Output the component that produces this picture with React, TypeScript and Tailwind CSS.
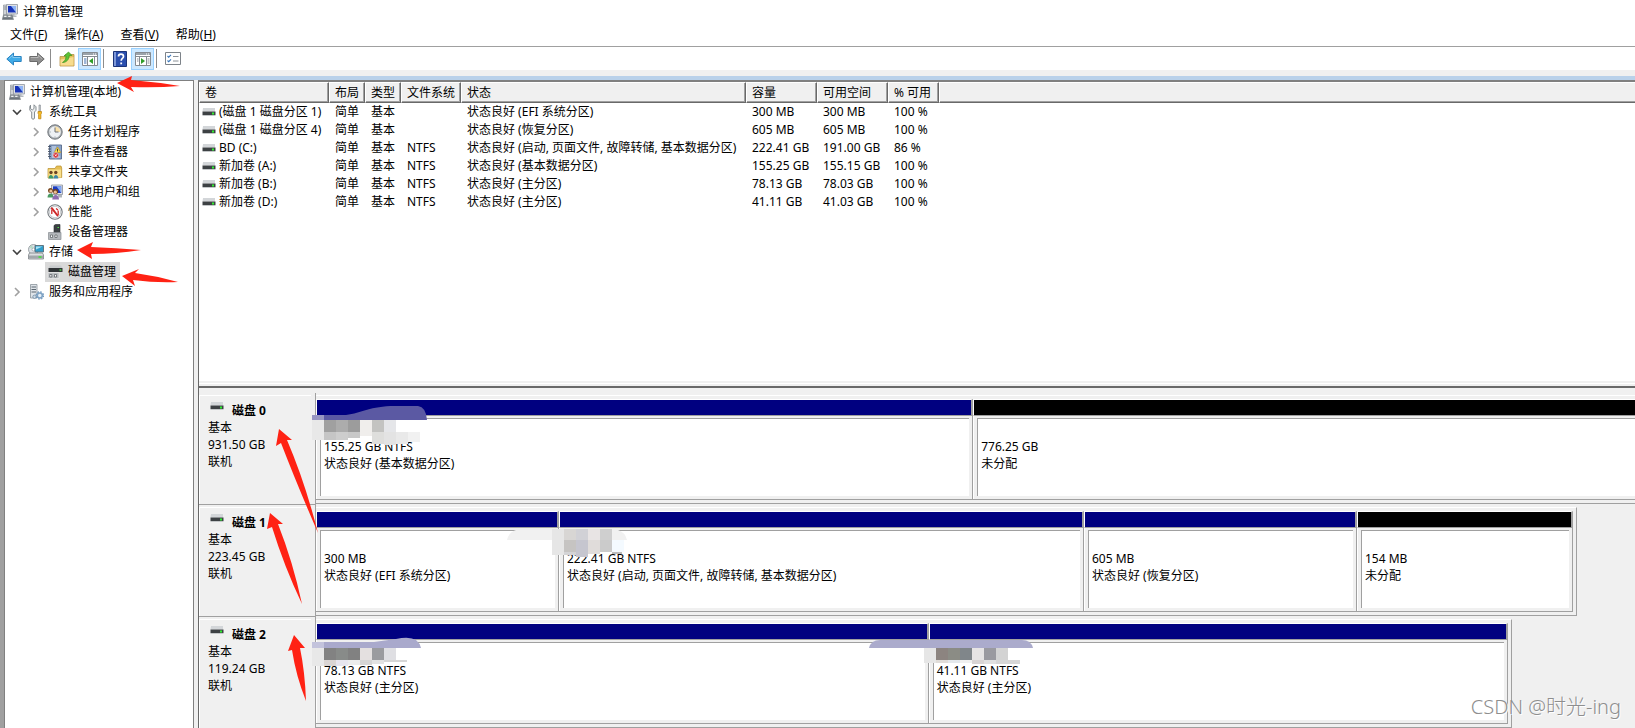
import React, { useState } from "react";

type IconProps = { className?: string };

type TreeItem = {
  label: string;
  level: number;
  arrow?: "open" | "closed";
  icon: (props: IconProps) => React.ReactElement;
};

type Volume = {
  name: string;
  fs: string;
  status: string;
  capacity: string;
  free: string;
  percent: string;
};

type Partition = {
  size: string;
  status: string;
  flex: string;
  unallocated?: boolean;
};

type Disk = {
  name: string;
  size: string;
  width: string;
  partitions: Partition[];
};

/* ---------- icons ---------- */

function ComputerIcon({ className }: IconProps) {
  return (
    <svg className={className} width="16" height="16" viewBox="0 0 16 16">
      <path d="M1.500 1h3.500v10H1.500z" fill="#cfd3d7" stroke="#858b91" strokeWidth=".6" />
      <path d="M2.300 3h2M2.300 5h2" stroke="#6b7178" strokeWidth=".8" />
      <path d="M4.500.5h11v9.500h-11z" fill="#dfe2e6" stroke="#9197a0" strokeWidth=".8" />
      <path d="M6 2h8v6.500H6z" fill="#1733b8" />
      <path d="M9 2h5v6.500z" fill="#8fb4f5" />
      <path d="M9 10h3.500v1.500h2V13H8z" fill="#b4b9be" />
      <path d="M1.500 11h8.500l1.500 4.500H.3z" fill="#8b9399" stroke="#6c747b" strokeWidth=".6" />
      <path d="M2.200 12.300h2.300M6.200 12.300h2.300" stroke="#f2f4f5" strokeWidth="1.200" />
      <path d="M1 14.200h9.500" stroke="#59616a" strokeWidth=".9" />
    </svg>
  );
}

function ToolsIcon({ className }: IconProps) {
  return (
    <svg className={className} width="16" height="16" viewBox="0 0 16 16">
      <path d="M2.500 1.200v3.300l1.700 1.500L6 4.500V.8l2 2v3.500L6.500 8v6c0 1.600-2.800 1.600-2.800 0V8L1.800 6.300V2.500z" fill="#eceeef" stroke="#7c8389" strokeWidth=".9" />
      <path d="M11 1h1.400v6.500H11z" fill="#d5d8db" stroke="#777e85" strokeWidth=".6" />
      <path d="M10 7.500h3.500v1.800l-.600 1v4.500h-2.300v-4.500l-.600-1z" fill="#f8bd25" stroke="#b87e0c" strokeWidth=".7" />
    </svg>
  );
}

function ClockIcon({ className }: IconProps) {
  return (
    <svg className={className} width="16" height="16" viewBox="0 0 16 16">
      <circle cx="8" cy="8" r="7.200" fill="#a4a9ae" stroke="#72777c" strokeWidth="1" />
      <circle cx="8" cy="8" r="5.800" fill="#eef1f4" />
      <path d="M8 2.500V8h5.200A5.300 5.300 0 0 0 8 2.500z" fill="#f8e0aa" />
      <path d="M8 3.500V8h3.500" fill="none" stroke="#6a7178" strokeWidth="1" />
      <path d="M8 12.500v1M2.700 8h1" stroke="#7e868d" strokeWidth=".8" />
    </svg>
  );
}

function EventIcon({ className }: IconProps) {
  return (
    <svg className={className} width="16" height="16" viewBox="0 0 16 16">
      <path d="M2.500 1h12v14h-12z" fill="#8ba4c8" stroke="#56698a" strokeWidth=".9" />
      <path d="M5 3h4M5 5h3M5 7h2.500M5 9h1.500M5 11h1M5 13h8" stroke="#dde6f2" strokeWidth=".9" />
      <path d="M1 2.500h3M1 5h3M1 7.500h3M1 10h3M1 12.500h3" stroke="#4a5364" strokeWidth=".9" />
      <path d="M10.500 3l3.200 5.500H7.300z" fill="#ffe14a" stroke="#c7940f" strokeWidth=".6" />
      <path d="M10.500 4.800V7M10.500 7.400v.700" stroke="#333" strokeWidth=".9" />
      <circle cx="8.800" cy="11.300" r="2.700" fill="#d62f35" stroke="#f3d4d6" strokeWidth=".6" />
      <path d="M7.800 10.300l2 2M9.800 10.300l-2 2" stroke="#fff" strokeWidth=".8" />
    </svg>
  );
}

function SharedFolderIcon({ className }: IconProps) {
  return (
    <svg className={className} width="16" height="16" viewBox="0 0 16 16">
      <path d="M1 4.500h7L9.500 2H14l.700 2V13.500L1 14z" fill="#e6bf55" stroke="#b98f2d" strokeWidth=".7" />
      <path d="M1.500 5.500H14V13.500L1.500 14z" fill="#f8df8c" />
      <circle cx="4" cy="8.500" r="1.700" fill="#6b4424" />
      <circle cx="8.800" cy="8.500" r="1.700" fill="#6b4424" />
      <path d="M1.500 14.500c0-4.800 4.800-4.800 4.800 0z" fill="#3c9a6a" />
      <path d="M6.500 14.500c0-4.800 4.800-4.800 4.800 0z" fill="#3f86a8" />
    </svg>
  );
}

function UsersIcon({ className }: IconProps) {
  return (
    <svg className={className} width="16" height="16" viewBox="0 0 16 16">
      <path d="M4.500 1h11v9.500h-11z" fill="#dfe3e8" stroke="#8b9199" strokeWidth=".8" />
      <path d="M6 2.300h8.200V9H6z" fill="#1b3cc0" />
      <path d="M9.500 2.300h4.700V9z" fill="#84abf3" />
      <path d="M11 11h4v2.500h-5z" fill="#b0b5ba" />
      <circle cx="3.500" cy="6.500" r="2.500" fill="#7a4a22" />
      <circle cx="3.800" cy="7" r="1.500" fill="#eabf94" />
      <circle cx="8.500" cy="7.500" r="2.600" fill="#6e421f" />
      <circle cx="8.300" cy="8.200" r="1.600" fill="#eabf94" />
      <path d="M.5 13.500c0-5.500 6-5.500 6 0z" fill="#4a9a62" />
      <path d="M5.300 15.500c0-6 6.700-6 6.700 0z" fill="#8d6cae" />
    </svg>
  );
}

function PerformanceIcon({ className }: IconProps) {
  return (
    <svg className={className} width="16" height="16" viewBox="0 0 16 16">
      <circle cx="8" cy="8" r="7.200" fill="#fff" stroke="#73787d" strokeWidth="1.100" />
      <circle cx="8" cy="8" r="5.700" fill="none" stroke="#c2c6ca" strokeWidth=".9" />
      <path d="M4.800 10V5.500M11.200 11V6.500M9 4.500l2 1.500" fill="none" stroke="#cf2a2a" strokeWidth="1.300" />
      <path d="M4.800 4.200l5.700 7.300" stroke="#cf2a2a" strokeWidth="2" strokeLinecap="round" />
    </svg>
  );
}

function DeviceIcon({ className }: IconProps) {
  return (
    <svg className={className} width="16" height="16" viewBox="0 0 16 16">
      <path d="M7 1.500l1.500-1H13V9H7z" fill="#3b4043" stroke="#25282b" strokeWidth=".6" />
      <path d="M10.500 3.500h1.500" stroke="#55e04e" strokeWidth="1.200" />
      <path d="M1.500 8.500H14V15.500H1.500z" fill="#b4b8bc" stroke="#888d92" strokeWidth=".7" />
      <path d="M3.500 11h2v2.500h-2zM8 11h2v2.500H8z" fill="#fff" stroke="#565b60" strokeWidth=".7" />
    </svg>
  );
}

function StorageIcon({ className }: IconProps) {
  return (
    <svg className={className} width="16" height="16" viewBox="0 0 16 16">
      <circle cx="5.500" cy="5.500" r="5" fill="#dde2e6" stroke="#899096" strokeWidth=".8" />
      <path d="M5.500 5.500L1.500 3.500A4.500 4.500 0 0 1 4 1.200z" fill="#b4dcc4" />
      <circle cx="5.500" cy="5.500" r="1.500" fill="#fff" stroke="#8a9096" strokeWidth=".6" />
      <path d="M7 1.500h8.500V8H7z" fill="#2e9dcb" stroke="#5c6d76" strokeWidth=".9" />
      <path d="M8 2.500h6.500L8 5.500z" fill="#a9e3f6" />
      <path d="M1.500 9h13l1 2v4H.5v-4z" fill="#dcdfe1" stroke="#7c8287" strokeWidth=".8" />
      <path d="M1 11.500h14v3H1z" fill="#a2a7ab" />
      <path d="M10.500 13h3" stroke="#45e03c" strokeWidth="1.600" />
    </svg>
  );
}

function DiskManageIcon({ className }: IconProps) {
  return (
    <svg className={className} width="16" height="16" viewBox="0 0 16 16">
      <path d="M3 1.500h11l1.500 2.500H1.500z" fill="#c9ccce" />
      <path d="M1.500 4h14v4h-14z" fill="#303437" />
      <path d="M12.500 6h1.800" stroke="#4fe048" strokeWidth="1.400" />
      <path d="M1 8.500h11V14.500H1z" fill="#b9bdc0" stroke="#e9e9e9" strokeWidth=".7" />
      <path d="M2.800 10.500h2v2.500h-2zM7.500 10.500h2v2.500h-2z" fill="#fff" stroke="#50555a" strokeWidth=".7" />
    </svg>
  );
}

function ServicesIcon({ className }: IconProps) {
  return (
    <svg className={className} width="16" height="16" viewBox="0 0 16 16">
      <path d="M2.500.5H9v13.500H2.500z" fill="#dfe4e9" stroke="#8a939b" strokeWidth=".8" />
      <path d="M3.500 3H8M3.500 5.500H8M3.500 8H8" stroke="#5b6670" strokeWidth="1" />
      <circle cx="11.800" cy="11.500" r="2.500" fill="#e8f0f7" stroke="#7fa3c4" strokeWidth="1.500" />
      <circle cx="11.800" cy="11.500" r="3.700" fill="none" stroke="#6f97bd" strokeWidth="1.200" strokeDasharray="1.600 1.300" />
      <circle cx="6.500" cy="12.800" r="1.700" fill="#cfdbe6" stroke="#7a94ac" strokeWidth=".9" />
    </svg>
  );
}

function DriveIcon({ className }: IconProps) {
  return (
    <svg className={className} width="14" height="8" viewBox="0 0 14 8">
      <path d="M1 0h12v3.500H.5z" fill="#d3d6d9" />
      <path d="M.5 3.500h13V7H.5z" fill="#3d4144" />
      <path d="M.5 7h13v1H.5z" fill="#c4c7c9" />
      <path d="M10 4.500h2v2h-2z" fill="#30ee30" />
    </svg>
  );
}

function ArrowIcon({ fill, stroke, flip }: { fill: string; stroke: string; flip?: boolean }) {
  return (
    <svg className={flip ? "-scale-x-100" : ""} width="16" height="16" viewBox="0 0 16 16">
      <path d="M.8 8L7.500 2v3.500h7.700v5H7.500V14z" fill={fill} stroke={stroke} strokeWidth="1" strokeLinejoin="round" />
      <path d="M3 7.700L6.800 4.200v2.300h7.500" fill="none" stroke="#fff" strokeOpacity=".4" strokeWidth=".9" />
    </svg>
  );
}

function UpFolderIcon() {
  return (
    <svg width="16" height="16" viewBox="0 0 16 16">
      <path d="M1 5.500h4.500l1-2H15v11.500H1z" fill="#e5bf5c" stroke="#b8934a" strokeWidth=".8" />
      <path d="M1.500 8.500L14.500 6v8.500h-13z" fill="#f7dc8e" />
      <path d="M3.500 11.500c2.500-1.300 3.500-3.500 3.500-6.500H5L9.500 1 13 4.500h-2.700C10 8.500 7.500 11.500 3.500 11.500z" fill="#5cc236" stroke="#3d9420" strokeWidth=".7" />
    </svg>
  );
}

function PaneIcon({ right }: { right?: boolean }) {
  return (
    <svg width="16" height="14" viewBox="0 0 16 14">
      <path d="M.5.5h15v13H.5z" fill="#fff" stroke="#858b91" />
      <path d="M1 1h14v2H1z" fill="#9ba3aa" />
      <path d="M11 2h1M13 2h1" stroke="#fff" />
      <path d="M1 4.500h14" stroke="#858b91" />
      {right ? (
        <>
          <path d="M11.500 5v8M4.500 5v8" stroke="#858b91" />
          <path d="M12.500 7h2M12.500 9h2M12.500 11h2M2 7h1.500M2 9h1.500" stroke="#858b91" />
          <path d="M6 6l4 3-4 3z" fill="#2f9e28" />
        </>
      ) : (
        <>
          <path d="M5.500 5v8M12.500 5v8" stroke="#858b91" />
          <path d="M2 7h2.500M2 9h2.500M2 11h2.500" stroke="#3f6fae" />
          <path d="M11 6L7 9l4 3z" fill="#2f9e28" />
        </>
      )}
    </svg>
  );
}

function HelpIcon() {
  return (
    <svg width="14" height="16" viewBox="0 0 14 16">
      <path d="M.5.5h13v15H.5z" fill="#2b4fae" stroke="#1c3479" />
      <path d="M1 1h2v14H1z" fill="#7e98d8" />
      <path d="M5.500 5.500c0-3.200 5-3.200 5 0 0 2-2.300 2-2.300 4.300" fill="none" stroke="#fff" strokeWidth="1.700" />
      <path d="M7.300 11.500h1.800v1.800H7.300z" fill="#fff" />
    </svg>
  );
}

function ListIcon() {
  return (
    <svg width="16" height="13" viewBox="0 0 16 13">
      <path d="M.5.5h15v12H.5z" fill="#fff" stroke="#7d8389" />
      <path d="M2.500 4l1.200 1.200L6 2.800M2.500 8.500l1.200 1.200L6 7.300" fill="none" stroke="#3876ba" strokeWidth="1.100" />
      <path d="M8 4.500h5.500M8 9h5.500" stroke="#8c9298" />
    </svg>
  );
}

function Chevron({ open }: { open: boolean }) {
  return (
    <svg width="10" height="10" viewBox="0 0 10 10" fill="none">
      {open ? (
        <path d="M1 3l4 4 4-4" stroke="#404040" strokeWidth="1.600" />
      ) : (
        <path d="M3 1l4 4-4 4" stroke="#a0a0a0" strokeWidth="1.600" />
      )}
    </svg>
  );
}

/* ---------- data ---------- */

const menus = [
  { text: "文件", key: "F" },
  { text: "操作", key: "A" },
  { text: "查看", key: "V" },
  { text: "帮助", key: "H" },
];

const tree: TreeItem[] = [
  { label: "计算机管理(本地)", level: 0, icon: ComputerIcon },
  { label: "系统工具", level: 1, arrow: "open", icon: ToolsIcon },
  { label: "任务计划程序", level: 2, arrow: "closed", icon: ClockIcon },
  { label: "事件查看器", level: 2, arrow: "closed", icon: EventIcon },
  { label: "共享文件夹", level: 2, arrow: "closed", icon: SharedFolderIcon },
  { label: "本地用户和组", level: 2, arrow: "closed", icon: UsersIcon },
  { label: "性能", level: 2, arrow: "closed", icon: PerformanceIcon },
  { label: "设备管理器", level: 2, icon: DeviceIcon },
  { label: "存储", level: 1, arrow: "open", icon: StorageIcon },
  { label: "磁盘管理", level: 2, icon: DiskManageIcon },
  { label: "服务和应用程序", level: 1, arrow: "closed", icon: ServicesIcon },
];

const indent = ["pl-[2px]", "pl-px", "pl-5"];

const columns = [
  { title: "卷", width: "w-[130px]" },
  { title: "布局", width: "w-9" },
  { title: "类型", width: "w-9" },
  { title: "文件系统", width: "w-[60px]" },
  { title: "状态", width: "w-[285px]" },
  { title: "容量", width: "w-[71px]" },
  { title: "可用空间", width: "w-[71px]" },
  { title: "% 可用", width: "w-[51px]" },
];

const volumes: Volume[] = [
  { name: "(磁盘 1 磁盘分区 1)", fs: "", status: "状态良好 (EFI 系统分区)", capacity: "300 MB", free: "300 MB", percent: "100 %" },
  { name: "(磁盘 1 磁盘分区 4)", fs: "", status: "状态良好 (恢复分区)", capacity: "605 MB", free: "605 MB", percent: "100 %" },
  { name: "BD (C:)", fs: "NTFS", status: "状态良好 (启动, 页面文件, 故障转储, 基本数据分区)", capacity: "222.41 GB", free: "191.00 GB", percent: "86 %" },
  { name: "新加卷 (A:)", fs: "NTFS", status: "状态良好 (基本数据分区)", capacity: "155.25 GB", free: "155.15 GB", percent: "100 %" },
  { name: "新加卷 (B:)", fs: "NTFS", status: "状态良好 (主分区)", capacity: "78.13 GB", free: "78.03 GB", percent: "100 %" },
  { name: "新加卷 (D:)", fs: "NTFS", status: "状态良好 (主分区)", capacity: "41.11 GB", free: "41.03 GB", percent: "100 %" },
];

// disk 0 is wider than the view and runs off its right edge
const disks: Disk[] = [
  {
    name: "磁盘 0",
    size: "931.50 GB",
    width: "w-[102%]",
    partitions: [
      { size: "155.25 GB NTFS", status: "状态良好 (基本数据分区)", flex: "flex-[657]" },
      { size: "776.25 GB", status: "未分配", flex: "flex-[688]", unallocated: true },
    ],
  },
  {
    name: "磁盘 1",
    size: "223.45 GB",
    width: "w-[95.6%] border-r pr-[3px]",
    partitions: [
      { size: "300 MB", status: "状态良好 (EFI 系统分区)", flex: "flex-[243]" },
      { size: "222.41 GB NTFS", status: "状态良好 (启动, 页面文件, 故障转储, 基本数据分区)", flex: "flex-[525]" },
      { size: "605 MB", status: "状态良好 (恢复分区)", flex: "flex-[273]" },
      { size: "154 MB", status: "未分配", flex: "flex-[216]", unallocated: true },
    ],
  },
  {
    name: "磁盘 2",
    size: "119.24 GB",
    width: "w-[90.7%] border-r pr-[3px]",
    partitions: [
      { size: "78.13 GB NTFS", status: "状态良好 (主分区)", flex: "flex-[613]" },
      { size: "41.11 GB NTFS", status: "状态良好 (主分区)", flex: "flex-[580]" },
    ],
  },
];

// x, y, width, height, colour
const mosaic: [number, number, number, number, string][] = [
  [312, 415, 12, 5, "#9896c2"],
  [312, 420, 12, 20, "#e8e8e8"],
  [324, 420, 12, 12, "#a0a0a0"],
  [336, 420, 12, 12, "#acacac"],
  [348, 420, 12, 12, "#9c9c9c"],
  [360, 420, 12, 16, "#f0eeec"],
  [372, 420, 12, 12, "#c3c3c1"],
  [384, 420, 12, 12, "#e5e6e9"],
  [324, 432, 12, 8, "#c5c5c5"],
  [336, 432, 12, 8, "#cdcdcd"],
  [348, 432, 12, 6, "#c8c8c8"],
  [372, 432, 12, 12, "#dededc"],
  [384, 432, 12, 13, "#e3e3e3"],
  [396, 432, 12, 12, "#e9e9e9"],
  [408, 432, 12, 10, "#f1f1f1"],
  [552, 529, 12, 26, "#e6e6e6"],
  [564, 529, 12, 11, "#d8d6d4"],
  [576, 529, 12, 11, "#d1d1d6"],
  [588, 529, 12, 11, "#e8e4e4"],
  [600, 529, 12, 11, "#cfcfcf"],
  [564, 540, 12, 12, "#c6c4c2"],
  [576, 540, 12, 17, "#c6c6cf"],
  [588, 540, 12, 14, "#e0dcda"],
  [600, 540, 12, 12, "#cbcbcb"],
  [612, 540, 12, 12, "#f4faff"],
  [564, 552, 12, 3, "#d4d4d6"],
  [612, 552, 10, 2, "#bcbcbc"],
  [312, 642, 12, 6, "#c3c3dc"],
  [312, 648, 12, 18, "#e8e8e8"],
  [324, 648, 12, 12, "#828282"],
  [336, 648, 12, 12, "#888b89"],
  [348, 648, 12, 12, "#818181"],
  [360, 648, 12, 12, "#e4e0e0"],
  [372, 648, 12, 12, "#9a9b9f"],
  [384, 648, 12, 12, "#dfdfe3"],
  [324, 660, 12, 6, "#dad5d3"],
  [336, 660, 12, 6, "#e7e5ee"],
  [348, 660, 12, 5, "#ececec"],
  [360, 660, 12, 5, "#d5d5d5"],
  [372, 660, 12, 4, "#e2e2e2"],
  [384, 660, 23, 2, "#d6d6d6"],
  [924, 648, 12, 15, "#e6e6e6"],
  [936, 648, 12, 12, "#8c8480"],
  [948, 648, 12, 12, "#8b8c85"],
  [960, 648, 12, 12, "#80868a"],
  [972, 648, 12, 12, "#e6e4e4"],
  [984, 648, 12, 12, "#9a9aa0"],
  [996, 648, 12, 12, "#d3d3d3"],
  [936, 660, 12, 3, "#e0dcd8"],
  [948, 660, 12, 3, "#e4e8ec"],
  [960, 660, 12, 3, "#f0f0f0"],
  [972, 660, 12, 4, "#d8d4d4"],
  [984, 660, 12, 4, "#e0e0e0"],
  [996, 660, 24, 4, "#d6d6d6"],
];

const arrows = [
  "M117 83L132 76L131 80Q156 82 180 86Q156 88 131 87L134 92Z",
  "M77 250L93 242L91 247Q116 248 141 250Q116 254 91 254L92 259Z",
  "M122 276L139 269L135 273Q157 276 178 282Q156 283 133 280L135 286Z",
  "M279 429L292 440L287 440Q305 482 318 533Q296 482 281 443L276 446Z",
  "M270 513L283 524L278 524Q293 562 302 604Q284 566 272 527L267 529Z",
  "M294 635L305 648L300 648Q305 672 306 701Q296 676 292 650L288 651Z",
];

/* ---------- parts ---------- */

function Toolbar() {
  const button = "flex h-[22px] w-[23px] items-center justify-center border border-transparent";
  const active = "flex h-[22px] w-[23px] items-center justify-center border border-[#99d1ff] bg-[#cce8ff]";
  const divider = "ml-[2px] mr-1 h-[19px] w-px bg-[#8c8c8c]";
  return (
    <div className="flex h-6 items-center border-t border-[#a0a0a0] bg-white pl-[2px]">
      <button className={button} aria-label="后退">
        <ArrowIcon fill="#3fabe8" stroke="#2b83c0" />
      </button>
      <button className={button} aria-label="前进">
        <ArrowIcon fill="#8f8f8f" stroke="#6b6b6b" flip />
      </button>
      <span className={divider} />
      <button className={button} aria-label="向上">
        <UpFolderIcon />
      </button>
      <button className={active} aria-label="显示/隐藏控制台树">
        <PaneIcon />
      </button>
      <span className={divider} />
      <button className={button} aria-label="帮助">
        <HelpIcon />
      </button>
      <button className={active} aria-label="显示/隐藏操作窗格">
        <PaneIcon right />
      </button>
      <span className={divider} />
      <button className={button} aria-label="属性">
        <ListIcon />
      </button>
    </div>
  );
}

function VolumeTable() {
  return (
    <div className="h-[299px] bg-white">
      <table className="w-full table-fixed border-separate border-spacing-0 text-left">
        <thead>
          <tr className="h-[21px]">
            {columns.map((c) => (
              <th
                key={c.title}
                className={`${c.width} border-b border-l border-r border-t border-b-[#696969] border-l-white border-r-[#696969] border-t-white bg-[#f0f0f0] p-0 pl-[5px] font-normal leading-[18px] shadow-[inset_-1px_-1px_0_#a0a0a0] whitespace-nowrap`}
              >
                {c.title}
              </th>
            ))}
            <th className="border-b border-l border-t border-b-[#696969] border-l-white border-t-white bg-[#f0f0f0] p-0 shadow-[inset_0_-1px_0_#a0a0a0]" />
          </tr>
        </thead>
        <tbody>
          {volumes.map((v) => (
            <tr key={v.name} className="h-[18px] whitespace-nowrap leading-[18px] [&>td]:p-0 [&>td]:pl-[6px]">
              <td>
                <div className="-ml-[3px] flex items-center gap-[3px]">
                  <DriveIcon className="shrink-0" />
                  {v.name}
                </div>
              </td>
              <td>简单</td>
              <td>基本</td>
              <td>{v.fs}</td>
              <td>{v.status}</td>
              <td>{v.capacity}</td>
              <td>{v.free}</td>
              <td>{v.percent}</td>
              <td />
            </tr>
          ))}
        </tbody>
      </table>
    </div>
  );
}

function PartitionCell({ part }: { part: Partition }) {
  return (
    <div className={`${part.flex} flex min-w-0 flex-col border-b border-b-[#a0a0a0]`}>
      <div className="h-4 border-l border-r-2 border-t border-l-white border-r-[#a0a0a0] border-t-white">
        <div className={`h-full ${part.unallocated ? "bg-black" : "bg-[#000080]"}`} />
      </div>
      <div className="flex flex-1 border-l border-r border-t border-l-white border-r-[#a0a0a0] border-t-[#a0a0a0] px-[3px] pb-[3px] pt-[2px]">
        <div className="min-w-0 flex-1 whitespace-nowrap border-l border-t border-[#a0a0a0] bg-white pl-[3px] pt-[19px] leading-[17px]">
          <p>{part.size}</p>
          <p>{part.status}</p>
        </div>
      </div>
    </div>
  );
}

function DiskRow({ disk }: { disk: Disk }) {
  return (
    <div className="flex h-28 shrink-0">
      <div className="flex w-[117px] shrink-0 flex-col border-b border-r border-[#a0a0a0] pt-[2px]">
        <div className="mr-1 flex-1 border-l border-t border-white pl-2 pt-[6px] leading-[17px]">
          <div className="flex items-start gap-2 pl-[2px]">
            <DriveIcon />
            <span className="font-bold">{disk.name}</span>
          </div>
          <p>基本</p>
          <p>{disk.size}</p>
          <p>联机</p>
        </div>
      </div>
      <div className="min-w-0 flex-1 pt-[2px]">
        <div className={`${disk.width} flex h-[109px] border-b border-t border-b-[#a0a0a0] border-r-[#a0a0a0] border-t-white pb-[3px] pt-[3px]`}>
          {disk.partitions.map((p) => (
            <PartitionCell key={p.size} part={p} />
          ))}
        </div>
      </div>
    </div>
  );
}

// red arrows and blurred volume names drawn over the window
function Markup() {
  return (
    <svg className="pointer-events-none absolute left-0 top-0" width="1635" height="728" viewBox="0 0 1635 728" aria-hidden="true">
      <path d="M324 420V415H346C362 413 370 406 395 406H418Q426 407 427 420Z" fill="#5b59a3" />
      <path d="M507 540Q509 532 516 530H618Q625 532 627 540Z" fill="#f1f1f1" />
      <path d="M324 648V642H374L396 639Q418 634 421 648Z" fill="#a9a9cc" />
      <path d="M869 648Q871 640 880 640H1022Q1031 640 1033 648Z" fill="#ababcc" />
      <g shapeRendering="crispEdges">
        {mosaic.map(([x, y, w, h, fill]) => (
          <rect key={`${x}-${y}`} x={x} y={y} width={w} height={h} fill={fill} />
        ))}
      </g>
      {arrows.map((d) => (
        <path key={d} d={d} fill="#ff2214" />
      ))}
    </svg>
  );
}

export default function App() {
  const [selected, setSelected] = useState("磁盘管理");

  return (
    <div className="relative flex h-screen flex-col overflow-hidden bg-[#f0f0f0] font-['Noto_Sans','Noto_Sans_CJK_SC',sans-serif] text-[12px] text-black">
      {/* title bar */}
      <header className="flex h-[23px] shrink-0 items-center gap-[5px] bg-white pl-[2px]">
        <ComputerIcon />
        <h1>计算机管理</h1>
      </header>

      <nav className="flex h-[23px] shrink-0 items-center gap-px bg-white pl-[2px]">
        {menus.map((m) => (
          <button key={m.key} className="px-2">
            {m.text}(<span className="underline">{m.key}</span>)
          </button>
        ))}
      </nav>

      <Toolbar />

      <div className="mt-[6px] h-1 shrink-0 bg-[#b9d1ea]" />

      <div className="flex min-h-0 flex-1 border-l-4 border-[#a0a0a0]">
        {/* console tree */}
        <aside className="w-[190px] shrink-0 border-l border-r border-t border-[#808080] bg-white pt-px">
          <ul>
            {tree.map((item) => (
              <li key={item.label} className={`flex h-5 items-center ${indent[item.level]}`}>
                {item.level > 0 && (
                  <span className="mr-1 flex w-4 justify-end">
                    {item.arrow && <Chevron open={item.arrow === "open"} />}
                  </span>
                )}
                <button
                  onClick={() => setSelected(item.label)}
                  className={`flex h-5 items-center gap-[5px] whitespace-nowrap pl-[2px] pr-1 ${
                    selected === item.label ? "bg-[#d9d9d9]" : ""
                  }`}
                >
                  <item.icon className="shrink-0" />
                  {item.label}
                </button>
              </li>
            ))}
          </ul>
        </aside>

        <main className="ml-1 flex min-w-0 flex-1 flex-col border-l border-t-2 border-l-[#696969] border-t-[#808080]">
          <VolumeTable />
          {/* splitter */}
          <div className="h-[7px] shrink-0 border-b-2 border-[#696969] pt-[2px]">
            <div className="h-px bg-white" />
          </div>
          <section className="min-h-0 flex-1 overflow-hidden pt-[5px]">
            {disks.map((d) => (
              <DiskRow key={d.name} disk={d} />
            ))}
          </section>
        </main>
      </div>

      <Markup />
      <div className="absolute bottom-2 right-[14px] text-[20px] font-light leading-[26px] text-[#8e8e8e] [text-shadow:1px_1px_0_#fff]">
        CSDN @时光-ing
      </div>
    </div>
  );
}
